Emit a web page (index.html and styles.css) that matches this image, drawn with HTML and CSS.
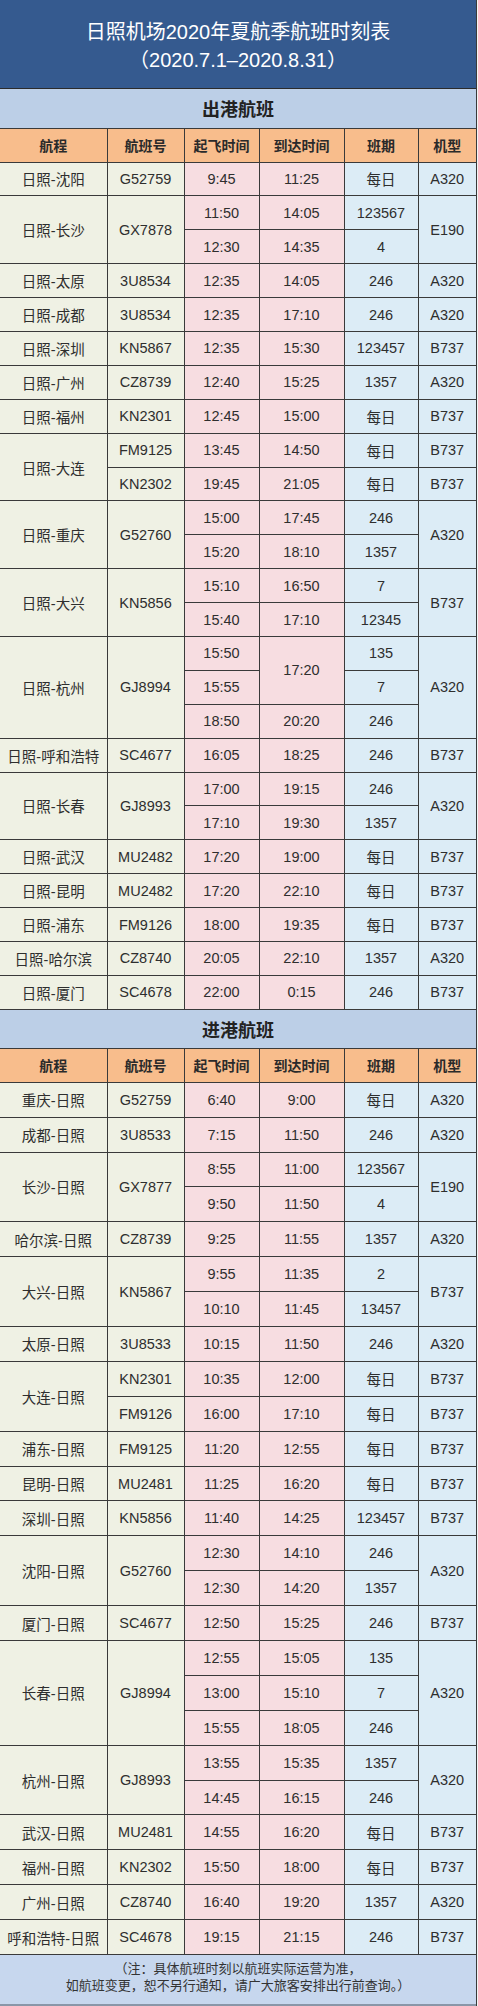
FILE: index.html
```html
<!DOCTYPE html>
<html lang="zh-CN">
<head>
<meta charset="utf-8">
<title>日照机场2020年夏航季航班时刻表</title>
<link rel="stylesheet" href="styles.css">
</head>
<body>
<div class="sheet">
  <header class="title">
    <div>日照机场2020年夏航季航班时刻表</div>
    <div>（2020.7.1–2020.8.31）</div>
  </header>
  <table class="tt">
    <colgroup>
      <col class="k1"><col class="k2"><col class="k3"><col class="k4"><col class="k5"><col class="k6">
    </colgroup>
    <tbody class="out">
      <tr class="sec"><td colspan="6">出港航班</td></tr>
      <tr class="hd"><td>航程</td><td>航班号</td><td>起飞时间</td><td>到达时间</td><td>班期</td><td>机型</td></tr>
      <tr><td>日照-沈阳</td><td>G52759</td><td>9:45</td><td>11:25</td><td>每日</td><td>A320</td></tr>
      <tr><td rowspan="2">日照-长沙</td><td rowspan="2">GX7878</td><td>11:50</td><td>14:05</td><td>123567</td><td rowspan="2">E190</td></tr>
      <tr><td>12:30</td><td>14:35</td><td>4</td></tr>
      <tr><td>日照-太原</td><td>3U8534</td><td>12:35</td><td>14:05</td><td>246</td><td>A320</td></tr>
      <tr><td>日照-成都</td><td>3U8534</td><td>12:35</td><td>17:10</td><td>246</td><td>A320</td></tr>
      <tr><td>日照-深圳</td><td>KN5867</td><td>12:35</td><td>15:30</td><td>123457</td><td>B737</td></tr>
      <tr><td>日照-广州</td><td>CZ8739</td><td>12:40</td><td>15:25</td><td>1357</td><td>A320</td></tr>
      <tr><td>日照-福州</td><td>KN2301</td><td>12:45</td><td>15:00</td><td>每日</td><td>B737</td></tr>
      <tr><td rowspan="2">日照-大连</td><td>FM9125</td><td>13:45</td><td>14:50</td><td>每日</td><td>B737</td></tr>
      <tr><td>KN2302</td><td>19:45</td><td>21:05</td><td>每日</td><td>B737</td></tr>
      <tr><td rowspan="2">日照-重庆</td><td rowspan="2">G52760</td><td>15:00</td><td>17:45</td><td>246</td><td rowspan="2">A320</td></tr>
      <tr><td>15:20</td><td>18:10</td><td>1357</td></tr>
      <tr><td rowspan="2">日照-大兴</td><td rowspan="2">KN5856</td><td>15:10</td><td>16:50</td><td>7</td><td rowspan="2">B737</td></tr>
      <tr><td>15:40</td><td>17:10</td><td>12345</td></tr>
      <tr><td rowspan="3">日照-杭州</td><td rowspan="3">GJ8994</td><td>15:50</td><td rowspan="2">17:20</td><td>135</td><td rowspan="3">A320</td></tr>
      <tr><td>15:55</td><td>7</td></tr>
      <tr><td>18:50</td><td>20:20</td><td>246</td></tr>
      <tr><td>日照-呼和浩特</td><td>SC4677</td><td>16:05</td><td>18:25</td><td>246</td><td>B737</td></tr>
      <tr><td rowspan="2">日照-长春</td><td rowspan="2">GJ8993</td><td>17:00</td><td>19:15</td><td>246</td><td rowspan="2">A320</td></tr>
      <tr><td>17:10</td><td>19:30</td><td>1357</td></tr>
      <tr><td>日照-武汉</td><td>MU2482</td><td>17:20</td><td>19:00</td><td>每日</td><td>B737</td></tr>
      <tr><td>日照-昆明</td><td>MU2482</td><td>17:20</td><td>22:10</td><td>每日</td><td>B737</td></tr>
      <tr><td>日照-浦东</td><td>FM9126</td><td>18:00</td><td>19:35</td><td>每日</td><td>B737</td></tr>
      <tr><td>日照-哈尔滨</td><td>CZ8740</td><td>20:05</td><td>22:10</td><td>1357</td><td>A320</td></tr>
      <tr><td>日照-厦门</td><td>SC4678</td><td>22:00</td><td>0:15</td><td>246</td><td>B737</td></tr>
    </tbody>
    <tbody class="in">
      <tr class="sec"><td colspan="6">进港航班</td></tr>
      <tr class="hd"><td>航程</td><td>航班号</td><td>起飞时间</td><td>到达时间</td><td>班期</td><td>机型</td></tr>
      <tr><td>重庆-日照</td><td>G52759</td><td>6:40</td><td>9:00</td><td>每日</td><td>A320</td></tr>
      <tr><td>成都-日照</td><td>3U8533</td><td>7:15</td><td>11:50</td><td>246</td><td>A320</td></tr>
      <tr><td rowspan="2">长沙-日照</td><td rowspan="2">GX7877</td><td>8:55</td><td>11:00</td><td>123567</td><td rowspan="2">E190</td></tr>
      <tr><td>9:50</td><td>11:50</td><td>4</td></tr>
      <tr><td>哈尔滨-日照</td><td>CZ8739</td><td>9:25</td><td>11:55</td><td>1357</td><td>A320</td></tr>
      <tr><td rowspan="2">大兴-日照</td><td rowspan="2">KN5867</td><td>9:55</td><td>11:35</td><td>2</td><td rowspan="2">B737</td></tr>
      <tr><td>10:10</td><td>11:45</td><td>13457</td></tr>
      <tr><td>太原-日照</td><td>3U8533</td><td>10:15</td><td>11:50</td><td>246</td><td>A320</td></tr>
      <tr><td rowspan="2">大连-日照</td><td>KN2301</td><td>10:35</td><td>12:00</td><td>每日</td><td>B737</td></tr>
      <tr><td>FM9126</td><td>16:00</td><td>17:10</td><td>每日</td><td>B737</td></tr>
      <tr><td>浦东-日照</td><td>FM9125</td><td>11:20</td><td>12:55</td><td>每日</td><td>B737</td></tr>
      <tr><td>昆明-日照</td><td>MU2481</td><td>11:25</td><td>16:20</td><td>每日</td><td>B737</td></tr>
      <tr><td>深圳-日照</td><td>KN5856</td><td>11:40</td><td>14:25</td><td>123457</td><td>B737</td></tr>
      <tr><td rowspan="2">沈阳-日照</td><td rowspan="2">G52760</td><td>12:30</td><td>14:10</td><td>246</td><td rowspan="2">A320</td></tr>
      <tr><td>12:30</td><td>14:20</td><td>1357</td></tr>
      <tr><td>厦门-日照</td><td>SC4677</td><td>12:50</td><td>15:25</td><td>246</td><td>B737</td></tr>
      <tr><td rowspan="3">长春-日照</td><td rowspan="3">GJ8994</td><td>12:55</td><td>15:05</td><td>135</td><td rowspan="3">A320</td></tr>
      <tr><td>13:00</td><td>15:10</td><td>7</td></tr>
      <tr><td>15:55</td><td>18:05</td><td>246</td></tr>
      <tr><td rowspan="2">杭州-日照</td><td rowspan="2">GJ8993</td><td>13:55</td><td>15:35</td><td>1357</td><td rowspan="2">A320</td></tr>
      <tr><td>14:45</td><td>16:15</td><td>246</td></tr>
      <tr><td>武汉-日照</td><td>MU2481</td><td>14:55</td><td>16:20</td><td>每日</td><td>B737</td></tr>
      <tr><td>福州-日照</td><td>KN2302</td><td>15:50</td><td>18:00</td><td>每日</td><td>B737</td></tr>
      <tr><td>广州-日照</td><td>CZ8740</td><td>16:40</td><td>19:20</td><td>1357</td><td>A320</td></tr>
      <tr><td>呼和浩特-日照</td><td>SC4678</td><td>19:15</td><td>21:15</td><td>246</td><td>B737</td></tr>
    </tbody>
    <tfoot>
      <tr class="note"><td colspan="6">（注：具体航班时刻以航班实际运营为准，<br>如航班变更，恕不另行通知，请广大旅客安排出行前查询。）</td></tr>
    </tfoot>
  </table>
</div>
</body>
</html>
```

FILE: styles.css
```css
html, body {
  margin: 0;
  padding: 0;
  background: #f4f4f4;
}
body {
  font-family: "Liberation Sans", "Noto Sans CJK SC", sans-serif;
  color: #333;
}
.sheet {
  width: 477px;
  border-right: 1.5px solid #3a3a3a;
  box-sizing: border-box;
}
.title {
  height: 89px;
  box-sizing: border-box;
  padding-top: 18px;
  background: #355a8f;
  color: #ffffff;
  font-size: 20px;
  line-height: 28px;
  text-align: center;
  border-bottom: 1.5px solid #2b2b2b;
}
.tt {
  width: 100%;
  border-collapse: collapse;
  table-layout: fixed;
}
.k1 { width: 107px; background: #eff1e4; }
.k2 { width: 77px; background: #eff1e4; }
.k3 { width: 75px; background: #f7dde1; }
.k4 { width: 85px; background: #f7dde1; }
.k5 { width: 74px; background: #dcecf6; }
.k6 { background: #dcecf6; }
.tt td {
  border: 1.5px solid #3a3a3a;
  padding: 0;
  text-align: center;
  vertical-align: middle;
  font-size: 14.5px;
  color: #2e2e2e;
  white-space: nowrap;
}
.tt tr:first-child td { border-top: 0; }
.tt td:first-child { border-left: 0; }
.tt td:last-child { border-right: 0; }
.out tr { height: 33.9px; }
.in tr { height: 34.9px; }
.tt tr.sec { height: 39px; background: #bccfe7; }
.tt tr.sec td {
  font-size: 18px;
  font-weight: bold;
  color: #222;
}
.tt tr.hd { height: 34px; background: #f8bd8c; }
.tt tr.hd td {
  font-size: 14px;
  font-weight: bold;
  color: #2a2a2a;
}
.tt tr.note { height: 50px; background: #c7d7ee; }
.tt tr.note td {
  font-size: 13px;
  line-height: 17px;
  color: #333;
  padding-bottom: 4px;
  border-bottom: 2px solid #8a96a8;
}
```
